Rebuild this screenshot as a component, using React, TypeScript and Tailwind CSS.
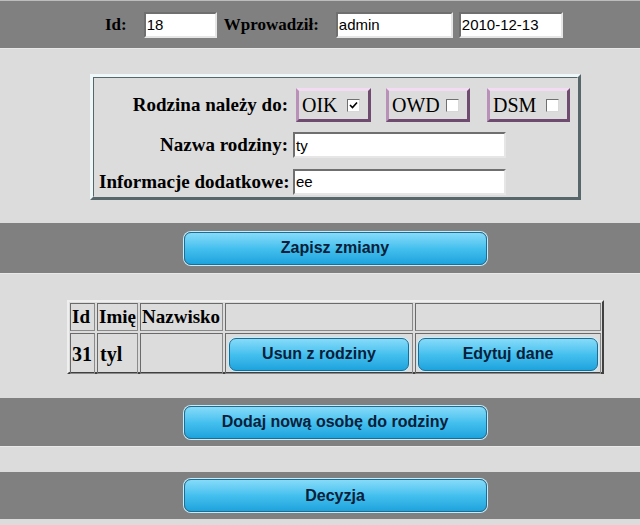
import React from 'react';

const serif = "font-['Liberation_Serif','Times_New_Roman',serif]";
const sans = "font-['Liberation_Sans',Arial,sans-serif]";

function TextInput({ value, width }: { value: string; width: string }) {
  return (
    <div
      className={`${width} h-[26px] bg-white border-2 border-t-[#6f6f6f] border-l-[#6f6f6f] border-b-[#e6e6e6] border-r-[#e6e6e6] flex items-center pl-[1px] text-[15px] font-normal text-black leading-none ${sans}`}
    >
      {value}
    </div>
  );
}

function BlueButton({ label, width }: { label: string; width: string }) {
  return (
    <button
      type="button"
      className={`${width} h-[33px] rounded-[7px] border border-[#25698c] ring-1 ring-[#bfeeff] bg-gradient-to-b from-[#84dbf9] via-[#44c0ee] to-[#1ca3dd] text-[16px] font-bold text-[#07203a] ${sans} flex items-center justify-center`}
    >
      {label}
    </button>
  );
}

function Checkbox({ checked }: { checked?: boolean }) {
  return (
    <span className="w-[13px] h-[13px] bg-white border border-t-[#707070] border-l-[#707070] border-b-[#d8d8d8] border-r-[#d8d8d8] flex items-center justify-center">
      {checked && (
        <svg width="9" height="9" viewBox="0 0 9 9">
          <path d="M1 4 L3.5 6.5 L8 1.5" fill="none" stroke="#000" strokeWidth="1.6" />
        </svg>
      )}
    </span>
  );
}

function GroupBox({ label, width, checked }: { label: string; width: string; checked?: boolean }) {
  return (
    <div
      className={`${width} h-[34px] border-[3px] border-t-[#f3dcf3] border-l-[#b890b8] border-b-[#6f4b6f] border-r-[#6f4b6f] bg-[#dcdcdc] flex items-center justify-between pl-[3px] pr-[8px] text-[20px] font-normal text-black ${serif}`}
    >
      <span>{label}</span>
      <Checkbox checked={checked} />
    </div>
  );
}

function Cell({ children, className = '' }: { children?: React.ReactNode; className?: string }) {
  return (
    <div className={`border border-t-[#6a6a6a] border-l-[#6a6a6a] border-b-[#8a8a8a] border-r-[#8a8a8a] flex items-center ${className}`}>
      {children}
    </div>
  );
}

export default function App() {
  return (
    <div className={`w-[640px] h-[525px] bg-[#dcdcdc] overflow-hidden ${serif}`}>
      {/* header band */}
      <div className="h-[48px] bg-[#808080] border-t border-[#bdbdbd] flex items-center pl-[105px] text-[17px] font-bold text-black">
        <span>Id:</span>
        <div className="ml-[17px]">
          <TextInput value="18" width="w-[73px]" />
        </div>
        <span className="ml-[7px]">Wprowadził:</span>
        <div className="ml-[17px]">
          <TextInput value="admin" width="w-[117px]" />
        </div>
        <div className="ml-[6px]">
          <TextInput value="2010-12-13" width="w-[104px]" />
        </div>
      </div>

      {/* family form */}
      <div className="h-[175px] border-t border-[#e8e8e8] pt-[25px] pl-[90px]">
        <div className="w-[491px] h-[126px] border-[3px] border-t-[#eef8f8] border-l-[#eef8f8] border-b-[#56666a] border-r-[#56666a]">
          <div className="h-full border border-t-[#56666a] border-l-[#56666a] border-b-[#dcdcdc] border-r-[#dcdcdc] pt-[9px] pl-[5px] grid grid-cols-[189px_auto] gap-y-[8px] items-center text-[19px] leading-[22px] font-bold text-black">
            <span className="text-right whitespace-nowrap">Rodzina należy do:</span>
            <div className="flex items-center pl-[8px]">
              <GroupBox label="OIK" width="w-[75px]" checked />
              <div className="ml-[15px]">
                <GroupBox label="OWD" width="w-[84px]" />
              </div>
              <div className="ml-[17px]">
                <GroupBox label="DSM" width="w-[83px]" />
              </div>
            </div>
            <span className="text-right whitespace-nowrap">Nazwa rodziny:</span>
            <div className="pl-[5px]">
              <TextInput value="ty" width="w-[213px]" />
            </div>
            <span className="text-right whitespace-nowrap">Informacje dodatkowe:</span>
            <div className="pl-[5px]">
              <TextInput value="ee" width="w-[213px]" />
            </div>
          </div>
        </div>
      </div>

      {/* save band */}
      <div className="h-[50px] bg-[#808080] flex items-center justify-center pl-[30px]">
        <BlueButton label="Zapisz zmiany" width="w-[303px]" />
      </div>

      {/* members table */}
      <div className="h-[125px] border-t border-[#e8e8e8] pt-[26px] pl-[67px]">
        <div className="w-[537px] h-[74px] border-2 border-t-[#efefef] border-l-[#efefef] border-b-[#404040] border-r-[#404040] p-[1px] grid grid-cols-[25px_41px_83px_188px_186px] grid-rows-[28px_41px] gap-[2px] text-[19px] font-bold text-black">
          <Cell className="pl-[1px]">Id</Cell>
          <Cell className="pl-[1px]">Imię</Cell>
          <Cell className="pl-[1px]">Nazwisko</Cell>
          <Cell />
          <Cell />
          <Cell className="pl-[1px] text-[20px]">31</Cell>
          <Cell className="pl-[2px] text-[20px]">tyl</Cell>
          <Cell />
          <Cell className="justify-center pt-[1px]">
            <BlueButton label="Usun z rodziny" width="w-[180px]" />
          </Cell>
          <Cell className="justify-center pt-[1px]">
            <BlueButton label="Edytuj dane" width="w-[180px]" />
          </Cell>
        </div>
      </div>

      {/* add band */}
      <div className="h-[48px] bg-[#808080] flex items-center justify-center pl-[30px]">
        <BlueButton label="Dodaj nową osobę do rodziny" width="w-[303px]" />
      </div>

      <div className="h-[26px] border-t border-[#e8e8e8]" />

      {/* decision band */}
      <div className="h-[47px] bg-[#808080] flex items-center justify-center pl-[30px]">
        <BlueButton label="Decyzja" width="w-[303px]" />
      </div>
    </div>
  );
}
